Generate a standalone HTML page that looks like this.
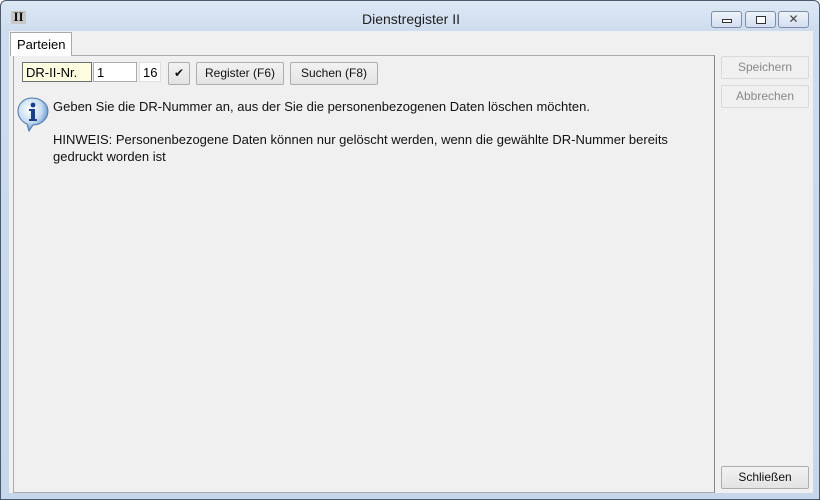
<!DOCTYPE html>
<html><head><style>
*{box-sizing:border-box;margin:0;padding:0}
body{width:820px;height:500px;overflow:hidden;font-family:"Liberation Sans",sans-serif;font-size:12px;background:#fff}
.win{position:absolute;left:0;top:0;width:820px;height:500px;border:1px solid #4a5a6e;border-radius:6px 6px 0 0;background:linear-gradient(#dde8f4,#cddcee 30px,#c6d7eb)}
.title{position:absolute;left:0;width:820px;top:10px;text-align:center;font-size:14px;color:#1e1e1e}
.ico{position:absolute;left:10px;top:10px;width:15px;height:13px;font:bold 13px "Liberation Serif",serif;line-height:12px;color:#111;background:#c8c8c8;text-align:center}
.cb{position:absolute;top:10px;width:31px;height:17px;border:1px solid #7d8ea6;border-radius:3px;background:linear-gradient(#eef3fa,#d3def0)}
.client{position:absolute;left:8px;top:30px;width:804px;height:462px;background:#f0f0f0}
.tab{position:absolute;left:9px;top:31px;width:62px;height:24px;background:#fff;border:1px solid #aaa;border-bottom:none;font-size:13px;padding:4px 0 0 6px;z-index:2}
.panel{position:absolute;left:12px;top:54px;width:702px;height:438px;border:1px solid #aaa;border-right-color:#8a8a8a;background:#f0f0f0}
.in{position:absolute;height:20px;border:1px solid #abadb3;background:#fff;font-size:13px;padding:2px 3px}
.btn{position:absolute;height:23px;border:1px solid #adadad;background:linear-gradient(#f2f2f2,#e3e3e3);border-radius:2px;text-align:center;font-size:12px;line-height:21px;color:#111}
.dis{color:#888;background:#f0f0f0;border-color:#d9d9d9}
.txt{position:absolute;font-size:13px;color:#111;line-height:17px}
</style></head><body>
<div class="win">
<div class="ico">II</div>
<div class="title">Dienstregister II</div>
<div class="cb" style="left:710px"><div style="position:absolute;left:10px;top:7px;width:10px;height:4px;border:1px solid #333;background:#fff"></div></div>
<div class="cb" style="left:744px"><div style="position:absolute;left:10px;top:4px;width:10px;height:8px;border:1px solid #333;background:#fff"></div></div>
<div class="cb" style="left:777px;font-size:12px;text-align:center;line-height:15px;color:#444">✕</div>
<div class="client"></div>
<div class="tab">Parteien</div>
<div class="panel"></div>
<div class="in" style="left:21px;top:61px;width:70px;background:#fdfde2;border-color:#6e6e6e">DR-II-Nr.</div>
<div class="in" style="left:92px;top:61px;width:44px">1</div>
<div class="in" style="left:138px;top:61px;width:22px;border-color:#e0e0e0">16</div>
<div class="btn" style="left:167px;top:61px;width:22px;font-size:12px">✔</div>
<div class="btn" style="left:195px;top:61px;width:88px">Register (F6)</div>
<div class="btn" style="left:289px;top:61px;width:88px">Suchen (F8)</div>
<svg style="position:absolute;left:15px;top:95px" width="34" height="36" viewBox="0 0 34 36">
<defs><radialGradient id="g" cx="40%" cy="35%" r="65%"><stop offset="0" stop-color="#fff"/><stop offset="0.6" stop-color="#c7dcf2"/><stop offset="1" stop-color="#5a8cc4"/></radialGradient></defs>
<path d="M16 2C8 2 2 8 2 15c0 6 4 11 9 13l2 7 4-6c8 0 15-6 15-14S24 2 16 2z" fill="url(#g)" stroke="#4a78b0"/>
<circle cx="17" cy="9" r="2.4" fill="#1a3e8a"/>
<path d="M13 13h6v10h2v2h-8v-2h2v-8h-2z" fill="#1a3e8a"/>
</svg>
<div class="txt" style="left:52px;top:97px">Geben Sie die DR-Nummer an, aus der Sie die personenbezogenen Daten löschen möchten.</div>
<div class="txt" style="left:52px;top:130px;width:650px">HINWEIS: Personenbezogene Daten können nur gelöscht werden, wenn die gewählte DR-Nummer bereits gedruckt worden ist</div>
<div class="btn dis" style="left:720px;top:55px;width:88px">Speichern</div>
<div class="btn dis" style="left:720px;top:84px;width:88px">Abbrechen</div>
<div class="btn" style="left:720px;top:465px;width:88px">Schließen</div>
</div>
</body></html>
